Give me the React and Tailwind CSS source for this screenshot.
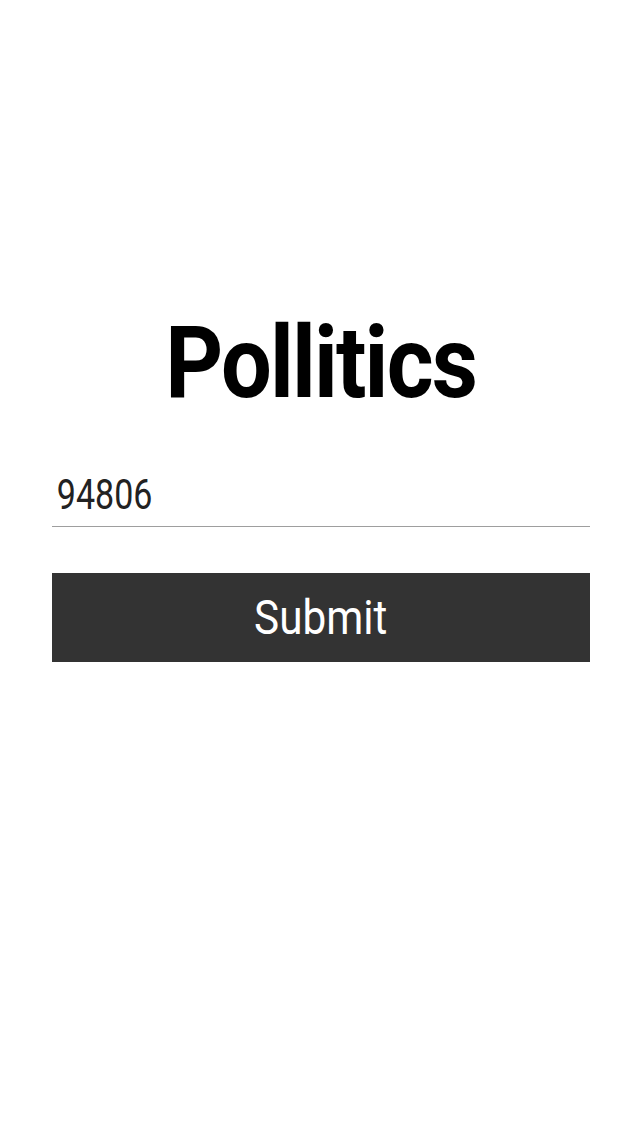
import React, { useState } from 'react';

const App = () => {
  const [zip, setZip] = useState('94806');

  return (
    <div
      className="min-h-[1136px] w-full bg-white flex flex-col items-center pt-[307px] pl-[52px] pr-[50px]"
      style={{ fontFamily: 'Roboto, "Noto Sans", sans-serif' }}
    >
      {/* Title */}
      <h1 className="h-[112px] flex items-center justify-center text-[100px] font-bold leading-none text-black tracking-[-2px]">
        <span className="inline-block scale-x-[0.9]">Pollitics</span>
      </h1>

      {/* Zip input */}
      <div className="w-full mt-[44px] border-b border-[#9e9e9e] h-[64px] flex items-center">
        <input
          value={zip}
          onChange={(e) => setZip(e.target.value)}
          className="w-full bg-transparent outline-none text-[42px] text-[#222] pl-[6px] origin-left scale-x-[0.81]"
        />
      </div>

      {/* Submit */}
      <button className="w-full mt-[46px] h-[89px] bg-[#333333] text-white text-[48px] flex items-center justify-center">
        <span className="inline-block scale-x-[0.88]">Submit</span>
      </button>
    </div>
  );
};

export default App;
